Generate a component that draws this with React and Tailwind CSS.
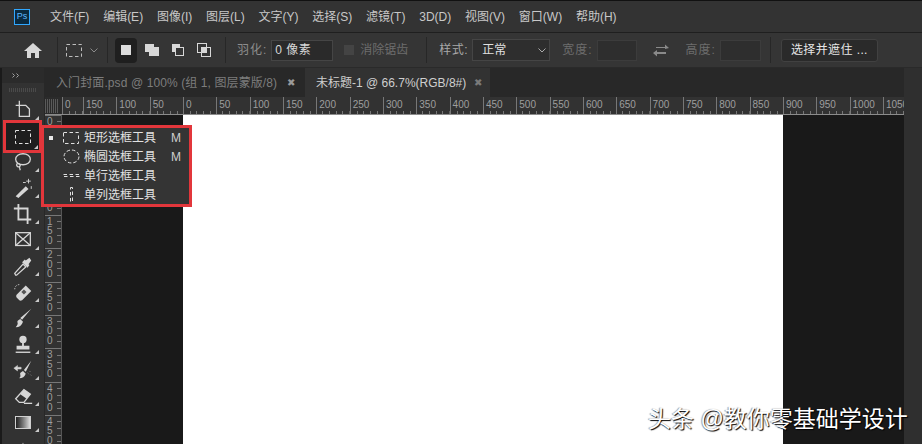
import React from 'react'

const menus = ['文件(F)', '编辑(E)', '图像(I)', '图层(L)', '文字(Y)', '选择(S)', '滤镜(T)', '3D(D)', '视图(V)', '窗口(W)', '帮助(H)']
const topLabels = [150, 100, 50, 0, 50, 100, 150, 200, 250, 300, 350, 400, 450, 500, 550, 600, 650, 700, 750, 800, 850, 900, 950, 1000, 1050]
const sideLabels = ['0', '50', '100', '150', '200', '250', '300', '350', '400', '450']

const stroke = { fill: 'none', stroke: '#d6d6d6', strokeWidth: 1.4 }

const tools = [
  <><path d="M8 2v5M4 7h11l4 4v8H8V7" {...stroke} /></>,
  <><rect x="4" y="5" width="15" height="13" {...stroke} strokeDasharray="3 2.5" /></>,
  <><ellipse cx="12" cy="9" rx="8" ry="6" {...stroke} /><path d="M6 13c-2 3 0 5 2 4s1-3-1-3M8 17l1 4" {...stroke} /></>,
  <><path d="M4 21L15 10l3 3L7 23z" fill="#d6d6d6" /><path d="M18 2v5M15.5 4.500h5M12 6h3M21 10v3" stroke="#d6d6d6" fill="none" /></>,
  <><path d="M7 1v17h14M2 6h15v17" fill="none" stroke="#d6d6d6" strokeWidth="2" /></>,
  <><rect x="4" y="4" width="16" height="14" {...stroke} /><path d="M4 4l16 14M20 4L4 18" {...stroke} /></>,
  <><path d="M4 22l-1-2 9-10 3 3-10 9z" {...stroke} /><path d="M11 8l6 6 2-3-1-1 3-4-2-3-4 3-1-1z" fill="#d6d6d6" /></>,
  <><path d="M5 15L15 5l6 6-10 10q-2 1-3 0l-3-3q-1-2 0-3z" fill="#d6d6d6" /><rect x="11" y="10" width="4" height="4" fill="#555" transform="rotate(45 13 12)" /><path d="M3 9a5 5 0 0 1 6-5" fill="none" stroke="#d6d6d6" strokeDasharray="1.500 1.500" /></>,
  <><path d="M21 2L11 14l-2-2zM9 13l3 3q-2 6-8 6 3-3 2-5t3-4z" fill="#d6d6d6" /></>,
  <><circle cx="12" cy="7" r="4" fill="#d6d6d6" /><path d="M11 10h2v4h6v4H5v-4h6z" fill="#d6d6d6" /><path d="M4 21h16" stroke="#d6d6d6" strokeWidth="1.500" /></>,
  <><path d="M21 2l-8 10 2 2zM12 13l3 3q-2 5-7 5 2-2 1-4t3-4z" fill="#d6d6d6" /><path d="M2 10l4-3v2h4v2H6v2zM17 15l1 1M20 17l1 1M19 13l1 1" fill="#d6d6d6" stroke="#d6d6d6" strokeWidth="0.500" /></>,
  <><path d="M4 15L13 5l7 5-7 9H8z" {...stroke} /><path d="M13 5l7 5-4 5-7-5z" fill="#d6d6d6" /><path d="M13 20h9" {...stroke} /></>,
]

function Tool({ children }) {
  return (
    <div className="relative h-[26px] w-[33px] flex items-center justify-center shrink-0">
      <svg width="22" height="22" viewBox="0 0 24 24">{children}</svg>
      <span className="absolute right-[1px] bottom-[3px] w-0 h-0 border-l-[4px] border-l-transparent border-b-[4px] border-b-[#c8c8c8]"></span>
    </div>
  )
}

function GradientTool() {
  return (
    <div className="relative h-[26px] w-[33px] flex items-center justify-center shrink-0">
      <div className="w-[16px] h-[13px] border border-[#d0d0d0] bg-gradient-to-r from-[#222] to-[#ddd]"></div>
      <span className="absolute right-[1px] bottom-[3px] w-0 h-0 border-l-[4px] border-l-transparent border-b-[4px] border-b-[#c8c8c8]"></span>
    </div>
  )
}

function Separator({ className }) {
  return <div className={`w-px h-[26px] bg-[#272727] ${className}`}></div>
}

function DashedRect({ w = 16, h = 13, color = '#e0e0e0' }) {
  return (
    <svg width={w} height={h} viewBox={`0 0 ${w} ${h}`}>
      <rect x="0.500" y="0.500" width={w - 1} height={h - 1} fill="none" stroke={color} strokeDasharray="3.500 2.500" />
    </svg>
  )
}

function MarqueeRow({ icon, label, shortcut, checked }) {
  return (
    <div className="h-[19px] flex items-center text-[12px] text-[#e2e2e2]">
      <div className="w-[9px] flex justify-center">
        {checked && <span className="w-[4px] h-[4px] bg-[#e8e8e8]"></span>}
      </div>
      <div className="w-[26px] ml-[3px] flex justify-center">{icon}</div>
      <span className="w-[87px]">{label}</span>
      <span className="text-[#cfcfcf]">{shortcut}</span>
    </div>
  )
}

export default function App() {
  return (
    <div
      className="relative w-[922px] h-[444px] overflow-hidden flex flex-col bg-[#323232] text-[#c4c4c4]"
      style={{ fontFamily: '"Liberation Sans", "Noto Sans CJK SC", sans-serif' }}
    >
      {/* Menu bar */}
      <div className="h-[33px] shrink-0 flex items-center border-t border-[#111] border-b border-b-[#1f1f1f] bg-[#333333]">
        <div className="ml-[14px] w-[16px] h-[16px] flex items-center justify-center border border-[#31a8ff] bg-[#0b2a3f] text-[9px] leading-none text-[#5cb8ff]">Ps</div>
        <div className="ml-[20px] flex gap-[13.8px] text-[12px] text-[#c8c8c8]">
          {menus.map((m) => (
            <span key={m}>{m}</span>
          ))}
        </div>
      </div>

      {/* Options bar */}
      <div className="h-[35px] shrink-0 flex items-center text-[12px] bg-[#353535] border-b border-[#2a2a2a]">
        <svg className="ml-[24px]" width="18" height="16" viewBox="0 0 18 16">
          <path d="M9 1L0 9h3v7h4v-5h4v5h4V9h3z" fill="#d8d8d8" />
        </svg>
        <Separator className="ml-[15px]" />
        <div className="ml-[8px] flex"><DashedRect color="#bdbdbd" /></div>
        <svg className="ml-[8px]" width="8" height="5" viewBox="0 0 8 5"><path d="M0.500 0.500L4 4l3.500-3.500" fill="none" stroke="#8a8a8a" /></svg>
        <Separator className="ml-[9px]" />
        <div className="ml-[7px] w-[22px] h-[25px] rounded-sm bg-[#1f1f1f] flex items-center justify-center">
          <span className="w-[10px] h-[10px] bg-[#dcdcdc]"></span>
        </div>
        <svg className="ml-[7px]" width="16" height="14" viewBox="0 0 16 14"><path d="M1 1h9v3h5v9H5v-4H1z" fill="#d8d8d8" /></svg>
        <svg className="ml-[11px]" width="14" height="14" viewBox="0 0 14 14"><path d="M1 1h8v3H4v5H1z" fill="#d8d8d8" /><rect x="4.500" y="4.500" width="8" height="8" fill="none" stroke="#d8d8d8" /></svg>
        <svg className="ml-[11px]" width="16" height="16" viewBox="0 0 16 16"><rect x="1.500" y="1.500" width="9" height="9" fill="none" stroke="#d8d8d8" /><rect x="5.500" y="5.500" width="9" height="9" fill="none" stroke="#d8d8d8" /><rect x="5.500" y="5.500" width="5" height="5" fill="#d8d8d8" /></svg>
        <Separator className="ml-[13px]" />
        <span className="ml-[11px] text-[#8d8d8d] tracking-[1px]">羽化:</span>
        <div className="ml-[4px] w-[62px] h-[21px] bg-[#2a2a2a] border border-[#454545] flex items-center pl-[3px] text-[#d8d8d8] tracking-[0.500px]">0 像素</div>
        <span className="ml-[11px] w-[10px] h-[10px] bg-[#444444]"></span>
        <span className="ml-[6px] text-[#6d6d6d]">消除锯齿</span>
        <Separator className="ml-[18px]" />
        <span className="ml-[12px] text-[#a8a8a8] tracking-[0.500px]">样式:</span>
        <div className="ml-[4px] w-[78px] h-[22px] bg-[#2e2e2e] border border-[#454545] flex items-center justify-between pl-[9px] pr-[3px] text-[#e0e0e0]">
          <span>正常</span>
          <svg width="8" height="5" viewBox="0 0 8 5"><path d="M0.500 0.500L4 4l3.500-3.500" fill="none" stroke="#aaa" /></svg>
        </div>
        <span className="ml-[12px] text-[#6d6d6d] tracking-[1px]">宽度:</span>
        <div className="ml-[4px] w-[40px] h-[21px] bg-[#2e2e2e] border border-[#3c3c3c]"></div>
        <svg className="ml-[16px]" width="16" height="14" viewBox="0 0 16 14"><path d="M3 4h9V1.500L16 5l-4 1V5H3zM13 9H4V7L0 10l4 3.500V11h9z" fill="#8a8a8a" /></svg>
        <span className="ml-[17px] text-[#6d6d6d] tracking-[1px]">高度:</span>
        <div className="ml-[4px] w-[41px] h-[21px] bg-[#2e2e2e] border border-[#3c3c3c]"></div>
        <Separator className="ml-[9px]" />
        <button className="ml-[10px] w-[97px] h-[23px] rounded-[3px] bg-[#2a2a2a] border border-[#414141] text-[12px] text-[#e6e6e6] tracking-[0.400px]">选择并遮住 ...</button>
      </div>

      {/* Work area */}
      <div className="flex-1 min-h-0 flex">
        {/* Toolbar */}
        <div className="w-[45px] shrink-0 flex flex-col items-center overflow-hidden border-l-[2px] border-[#1a1a1a] border-r border-r-[#282828] bg-[#323232]">
          <div className="h-[15px] shrink-0 w-full flex items-center pl-[10px] bg-[#2b2b2b]">
            <svg width="8" height="5" viewBox="0 0 8 5"><path d="M0.500 0.500L2.500 2.500L0.500 4.500M4.500 0.500L6.500 2.500L4.500 4.500" fill="none" stroke="#a0a0a0" /></svg>
          </div>
          <div className="h-[14px] shrink-0 w-full flex items-center justify-center">
            <div className="w-[28px] h-[4px] bg-[repeating-linear-gradient(90deg,#4a4a4a_0,#4a4a4a_1px,transparent_1px,transparent_2px)]"></div>
          </div>
          {tools.map((t, i) => (
            <Tool key={i}>{t}</Tool>
          ))}
          <GradientTool />
          <Tool><path d="M12 6l5 14H7z" fill="#d6d6d6" /></Tool>
        </div>

        <div className="flex-1 min-w-0 flex flex-col">
          {/* Tabs */}
          <div className="h-[29px] shrink-0 flex items-stretch bg-[#282828] text-[12px]">
            <div className="w-[260px] flex items-center pl-[11px] text-[#7d7d7d]">
              <span className="w-[231px] tracking-[0.100px] whitespace-nowrap">入门封面.psd @ 100% (组 1, 图层蒙版/8)</span>
              <span className="text-[10px] text-[#9a9a9a]">✖</span>
            </div>
            <div className="w-[185px] flex items-center pl-[11px] bg-[#323232] text-[#cfcfcf]">
              <span className="w-[158px] whitespace-nowrap">未标题-1 @ 66.7%(RGB/8#)</span>
              <span className="text-[10px] text-[#7a7a7a]">✖</span>
            </div>
          </div>

          {/* Horizontal ruler */}
          <div className="h-[18px] shrink-0 flex overflow-hidden bg-[#323232] border-b border-[#8c8c8c]">
            <div className="w-[17px] shrink-0 flex items-end pb-[1px] bg-[#2b2b2b]">
              <div className="w-[13px] h-[14px] bg-[repeating-linear-gradient(90deg,#5a5a5a_0,#5a5a5a_1px,transparent_1px,transparent_2px)]"></div>
            </div>
            <div className="w-[21px] shrink-0 border-l border-[#777] pl-[2px] text-[10px] leading-[16px] text-[#9e9e9e] bg-[repeating-linear-gradient(90deg,transparent_0,transparent_5.670px,#777_5.670px,#777_6.670px)] bg-[length:100%_3px] bg-bottom bg-no-repeat">0</div>
            {topLabels.map((n, i) => (
              <div key={i} className="w-[33.33px] shrink-0 border-l border-[#777] pl-[2px] text-[10px] leading-[16px] text-[#9e9e9e] overflow-hidden bg-[repeating-linear-gradient(90deg,transparent_0,transparent_5.670px,#777_5.670px,#777_6.670px)] bg-[length:100%_3px] bg-bottom bg-no-repeat">{n}</div>
            ))}
          </div>

          <div className="flex-1 min-h-0 flex">
            {/* Vertical ruler */}
            <div className="w-[17px] shrink-0 flex flex-col overflow-hidden bg-[#323232] border-r border-[#555]">
              {sideLabels.map((n, i) => (
                <div key={i} className="h-[33.33px] shrink-0 border-t border-[#777] pl-[2px] pt-px text-[10px] leading-[9.500px] text-[#9e9e9e] bg-[repeating-linear-gradient(0deg,transparent_0,transparent_5.670px,#777_5.670px,#777_6.670px)] bg-[length:4px_100%] bg-right bg-no-repeat">
                  {n.split('').map((d, j) => (
                    <div key={j}>{d}</div>
                  ))}
                </div>
              ))}
            </div>
            {/* Canvas */}
            <div className="flex-1 min-w-0 flex bg-[#191919]">
              <div className="ml-[121px] w-[600px] bg-white"></div>
            </div>
          </div>
        </div>

        {/* Right panel strip */}
        <div className="w-[18px] shrink-0 bg-[#2f2f2f]"></div>
      </div>

      {/* Highlighted marquee tool */}
      <div className="absolute left-[3px] top-[120px] w-[39px] h-[33px] border-[3px] border-[#e2363b] bg-[#1e1e1e] flex items-center justify-center">
        <DashedRect h={14} />
        <span className="absolute right-[1px] bottom-[1px] w-0 h-0 border-l-[4px] border-l-transparent border-b-[4px] border-b-[#c8c8c8]"></span>
      </div>

      {/* Flyout menu */}
      <div className="absolute left-[41px] top-[125px] w-[151px] h-[82px] border-[3px] border-[#e2363b] bg-[#343434] pl-[2px]">
        <MarqueeRow checked label="矩形选框工具" shortcut="M" icon={<DashedRect h={12} />} />
        <MarqueeRow
          label="椭圆选框工具"
          shortcut="M"
          icon={
            <svg width="17" height="15" viewBox="0 0 17 15">
              <ellipse cx="8.500" cy="7.500" rx="7.500" ry="6.500" fill="none" stroke="#e0e0e0" strokeDasharray="3.500 2" />
            </svg>
          }
        />
        <MarqueeRow label="单行选框工具" icon={<DashedRect w={17} h={3} />} />
        <MarqueeRow label="单列选框工具" icon={<DashedRect w={3} h={15} />} />
      </div>

      {/* Watermark */}
      <div className="absolute left-[648px] top-[404px] text-[23px] leading-[30px] whitespace-nowrap text-white [text-shadow:1px_1px_1px_#000,-1px_0_1px_#0006]">
        头条 @教你零基础学设计
      </div>
    </div>
  )
}
